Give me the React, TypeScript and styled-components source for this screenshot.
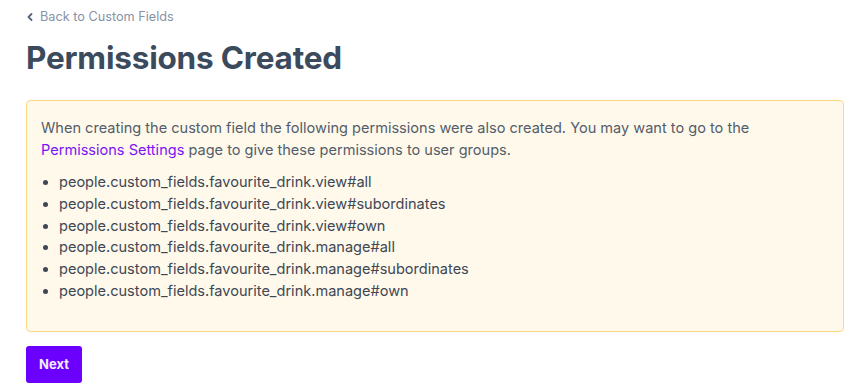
import React from "react";
import styled, { createGlobalStyle } from "styled-components";

const Global = createGlobalStyle`
  html, body { margin: 0; padding: 0; background: #ffffff; }
  body { font-family: Inter, "Noto Sans", sans-serif; -webkit-font-smoothing: antialiased; }
`;

const Page = styled.div`
  padding: 7px 23px 0 26px;
  display: flex;
  flex-direction: column;
`;

const BackLink = styled.a`
  display: inline-flex;
  align-items: center;
  gap: 7px;
  font-size: 12.7px;
  line-height: 20px;
  color: #8792a6;
  text-decoration: none;
  cursor: pointer;
  align-self: flex-start;
  padding-left: 1px;
`;

const Title = styled.h1`
  margin: 11px 0 22px;
  font-size: 31.5px;
  line-height: 40px;
  font-weight: 700;
  color: #3b4a5c;
  letter-spacing: -0.2px;
`;

const Notice = styled.div`
  background: #fef9eb;
  border: 1px solid #fcd980;
  border-radius: 4px;
  padding: 16px 14px 16px;
  color: #555d6a;
  font-size: 14.55px;
  line-height: 22px;
`;

const Paragraph = styled.p`
  margin: 0;
`;

const InlineLink = styled.a`
  color: #7b14f5;
  text-decoration: none;
`;

const PermList = styled.ul`
  margin: 11px 0 12px;
  padding-left: 18px;
  color: #3f4754;
`;

const PermItem = styled.li`
  line-height: 21.8px;
`;

const Actions = styled.div`
  margin-top: 14px;
  display: flex;
`;

const PrimaryButton = styled.button`
  width: 56px;
  height: 37px;
  border: none;
  border-radius: 3px;
  background: #6c00ff;
  color: #f3ecff;
  font-family: Inter, "Noto Sans", sans-serif;
  font-size: 13px;
  font-weight: 700;
  cursor: pointer;
`;

const perms = [
  "people.custom_fields.favourite_drink.view#all",
  "people.custom_fields.favourite_drink.view#subordinates",
  "people.custom_fields.favourite_drink.view#own",
  "people.custom_fields.favourite_drink.manage#all",
  "people.custom_fields.favourite_drink.manage#subordinates",
  "people.custom_fields.favourite_drink.manage#own",
];

export default function App() {
  return (
    <>
      <Global />
      <Page>
        <BackLink>
          <svg width="6" height="8" viewBox="0 0 6 8" fill="none">
            <path d="M4.5 1 L1.5 4 L4.5 7" stroke="#5a6578" strokeWidth="1.8" strokeLinecap="round" strokeLinejoin="round" />
          </svg>
          Back to Custom Fields
        </BackLink>
        <Title>Permissions Created</Title>
        <Notice>
          <Paragraph>
            When creating the custom field the following permissions were also created. You may want to go to the{" "}
            <InlineLink>Permissions Settings</InlineLink> page to give these permissions to user groups.
          </Paragraph>
          <PermList>
            {perms.map((p) => (
              <PermItem key={p}>{p}</PermItem>
            ))}
          </PermList>
        </Notice>
        <Actions>
          <PrimaryButton>Next</PrimaryButton>
        </Actions>
      </Page>
    </>
  );
}
